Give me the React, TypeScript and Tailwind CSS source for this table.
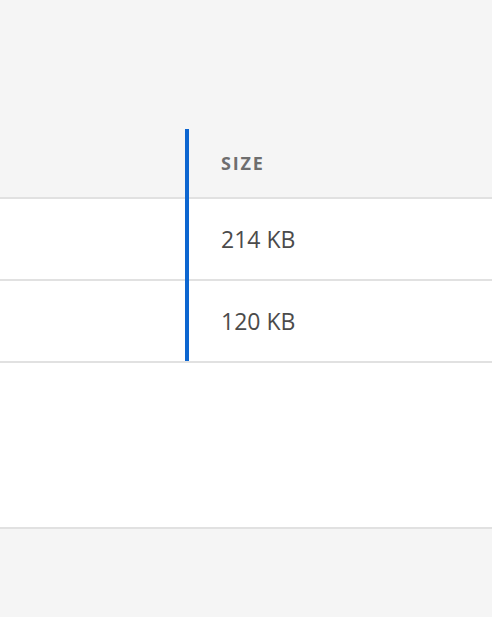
const rows = [{ size: '214 KB' }, { size: '120 KB' }];

export default function App() {
  return (
    <div
      className="w-full h-[617px] bg-[#f5f5f5] pt-[129px] overflow-hidden"
      style={{ fontFamily: '"Open Sans", "Liberation Sans", sans-serif' }}
    >
      <div className="relative">
        <div className="flex h-[70px] items-center border-b-2 border-[#e1e1e1]">
          <div className="w-[189px] shrink-0" />
          <div className="pl-8 text-[18px] font-bold uppercase tracking-[0.1em] text-[#6e6e6e]">Size</div>
        </div>
        <div className="bg-white">
          {rows.map((row, i) => (
            <div key={i} className="flex h-[82px] items-center border-b-2 border-[#e1e1e1]">
              <div className="w-[189px] shrink-0" />
              <div className="pl-8 text-[23px] text-[#4b4b4b]">{row.size}</div>
            </div>
          ))}
          <div className="h-[166px] border-b-2 border-[#e1e1e1]" />
        </div>
        {/* column resize indicator */}
        <div className="absolute left-[185px] top-0 w-[4px] h-[232px] bg-[#0d66d0]" />
      </div>
    </div>
  );
}
